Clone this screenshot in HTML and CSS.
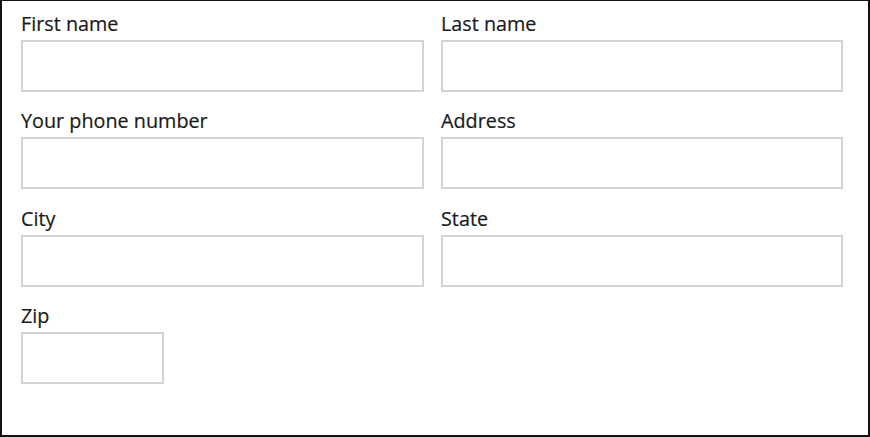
FILE: index.html
```html
<!DOCTYPE html>
<html lang="en">
<head>
    <meta charset="UTF-8">
    <meta name="viewport" content="width=device-width, initial-scale=1.0">
    <title>Address Form</title>
    <link rel="stylesheet" href="styles.css">
</head>
<body>

    <!-- Contact form -->
    <form class="frame">
        <div class="form-grid">
            <div class="field">
                <label for="first_name">First name</label>
                <input type="text" id="first_name" name="first_name">
            </div>
            <div class="field">
                <label for="last_name">Last name</label>
                <input type="text" id="last_name" name="last_name">
            </div>
            <div class="field">
                <label for="phone">Your phone number</label>
                <input type="text" id="phone" name="phone">
            </div>
            <div class="field">
                <label for="address">Address</label>
                <input type="text" id="address" name="address">
            </div>
            <div class="field">
                <label for="city">City</label>
                <input type="text" id="city" name="city">
            </div>
            <div class="field">
                <label for="state">State</label>
                <input type="text" id="state" name="state">
            </div>
            <div class="field">
                <label for="zip">Zip</label>
                <input type="text" id="zip" name="zip" class="input-zip">
            </div>
        </div>
    </form>

</body>
</html>
```

FILE: styles.css
```css
/* Global Styling */
body {
    font-family: 'Open Sans', 'Liberation Sans', sans-serif;
    margin: 0;
    padding: 0;
    background-color: #fff;
    color: #1a1a1a;
}

/* Outer frame */
.frame {
    width: 870px;
    height: 437px;
    box-sizing: border-box;
    border: 2px solid #111;
    border-top-width: 1px;
    padding: 11px 25px 0 19px;
    margin: 0;
}

.form-grid {
    display: grid;
    grid-template-columns: 403px 402px;
    column-gap: 17px;
    row-gap: 17.4px;
}

.field label {
    display: block;
    font-size: 19.8px;
    line-height: 24px;
    margin-bottom: 4px;
    color: #1a1a1a;
    -webkit-text-stroke: 0.2px #1a1a1a;
}

.field input {
    display: block;
    width: 100%;
    height: 52px;
    box-sizing: border-box;
    border: 2px solid #d4d4d4;
    background-color: #fff;
    margin: 0;
    padding: 0 10px;
    font-size: 16px;
}

.field .input-zip {
    width: 143px;
}
```
